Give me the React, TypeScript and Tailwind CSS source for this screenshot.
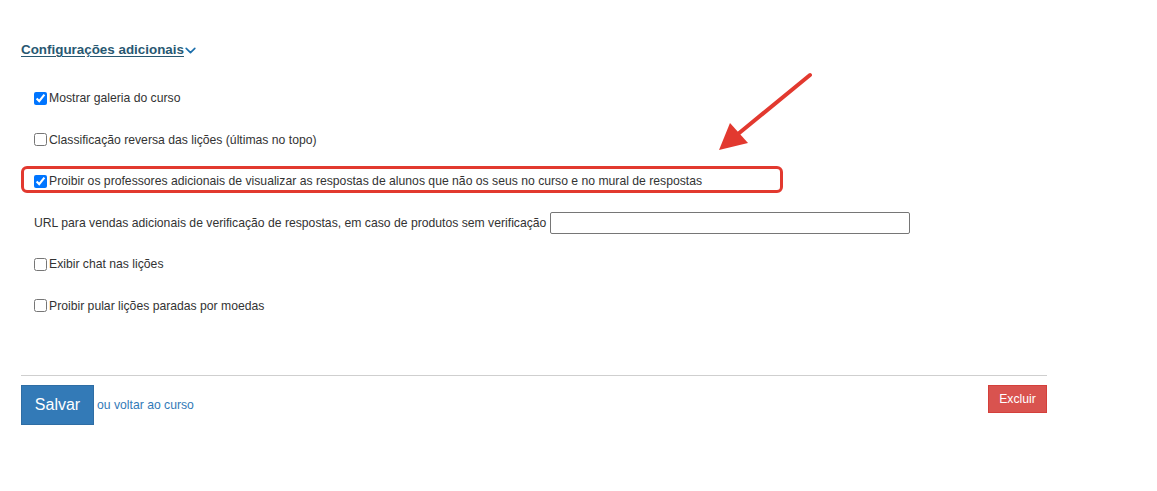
import { useState } from 'react'

const rowText = 'text-[12.2px] leading-[20px] text-[#333]'

function CheckRow({ label, defaultChecked = false, highlight = false }: { label: string; defaultChecked?: boolean; highlight?: boolean }) {
  const [checked, setChecked] = useState(defaultChecked)
  return (
    <div className="relative flex h-[20px] items-center">
      {highlight && (
        <div className="pointer-events-none absolute left-[-13px] top-[-5px] h-[27px] w-[762px] rounded-[6px] border-[3px] border-[#e2392f]" />
      )}
      <input
        type="checkbox"
        checked={checked}
        onChange={(e) => setChecked(e.target.checked)}
        className="m-0 h-[13px] w-[13px]"
      />
      <span className={`ml-[2px] ${rowText}`}>{label}</span>
    </div>
  )
}

export default function App() {
  return (
    <div className="relative min-h-screen bg-white font-['Liberation_Sans',Arial,sans-serif]">
      <div className="w-[1068px] px-[21px] pt-[40px]">
        <button className="flex h-[20px] items-center text-[13.4px] font-bold text-[#285872] underline underline-offset-2">
          Configurações adicionais
          <svg width="13" height="13" viewBox="0 0 24 24" fill="none" stroke="#1b6eab" strokeWidth="3" strokeLinecap="round" strokeLinejoin="round">
            <path d="M4 8l8 8 8-8" />
          </svg>
        </button>

        <div className="mt-[28px] flex flex-col gap-[21.6px] pl-[13px]">
          <CheckRow label="Mostrar galeria do curso" defaultChecked />
          <CheckRow label="Classificação reversa das lições (últimas no topo)" />
          <CheckRow
            label="Proibir os professores adicionais de visualizar as respostas de alunos que não os seus no curso e no mural de respostas"
            defaultChecked
            highlight
          />
          <div className="flex h-[20px] items-center">
            <span className={rowText}>URL para vendas adicionais de verificação de respostas, em caso de produtos sem verificação</span>
            <input type="text" className="ml-[4px] h-[22px] w-[360px] rounded-[2px] border border-[#767676] bg-white px-1 text-[13px]" />
          </div>
          <CheckRow label="Exibir chat nas lições" />
          <CheckRow label="Proibir pular lições paradas por moedas" />
        </div>

        <div className="mt-[59px] h-px w-full bg-[#cfcfcf]" />

        <div className="mt-[9px] flex items-start justify-between">
          <div className="flex items-center">
            <button className="h-[40px] w-[73px] border border-[#2e6da4] bg-[#337ab7] text-[16px] text-white">Salvar</button>
            <a href="#" className="ml-[3px] text-[12.2px] text-[#337ab7]">ou voltar ao curso</a>
          </div>
          <button className="h-[28px] w-[59px] border border-[#d43f3a] bg-[#d9534f] text-[12.2px] text-white">Excluir</button>
        </div>
      </div>

      <svg className="pointer-events-none absolute left-[700px] top-[60px]" width="120" height="100" viewBox="0 0 120 100">
        <line x1="110" y1="15" x2="38" y2="74" stroke="#e2392f" strokeWidth="4" strokeLinecap="round" />
        <polygon points="19,90 30,63 48,83" fill="#e2392f" />
      </svg>
    </div>
  )
}
